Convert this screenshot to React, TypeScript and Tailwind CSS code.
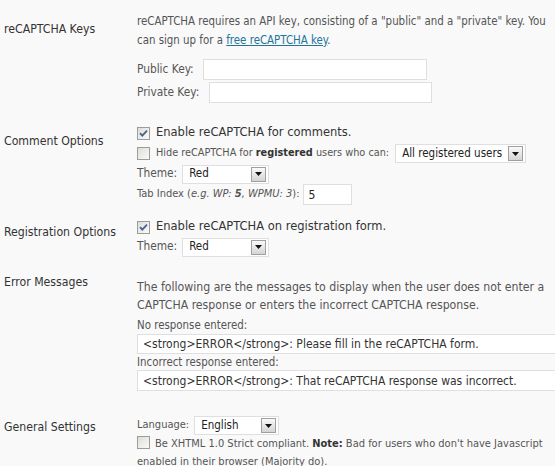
import React from 'react';

const cond = "font-['DejaVu_Sans_Condensed','DejaVu_Sans',sans-serif]";
const reg = "font-['DejaVu_Sans','Verdana',sans-serif]";

const Checkbox: React.FC<{ checked?: boolean }> = ({ checked = false }) => (
  <svg width="13" height="13" viewBox="0 0 13 13" className="shrink-0">
    <defs>
      <linearGradient id={checked ? 'cbOn' : 'cbOff'} x1="0" y1="0" x2="1" y2="1">
        <stop offset="0" stopColor="#dcdcd6" />
        <stop offset="1" stopColor="#fbfbfa" />
      </linearGradient>
    </defs>
    <rect x="0.5" y="0.5" width="12" height="12" fill={`url(#${checked ? 'cbOn' : 'cbOff'})`} stroke="#9c9c9c" />
    {checked && <path d="M3 6.2 L5.3 8.6 L10 3.6" fill="none" stroke="#4b5f94" strokeWidth="1.8" />}
  </svg>
);

const SelectBox: React.FC<{ value: string; width: string }> = ({ value, width }) => (
  <div
    className={`flex items-center justify-between h-[19px] border border-[#dfdfdf] bg-white pl-[6px] pr-[2px] shrink-0 ${width}`}
  >
    <span className={`${cond} text-[11.5px] text-[#222] whitespace-nowrap`}>{value}</span>
    <span className="flex items-center justify-center w-[15px] h-[15px] border border-[#a0a0a0] bg-gradient-to-b from-[#fafafa] to-[#d4d4d4]">
      <svg width="7" height="4" viewBox="0 0 7 4">
        <path d="M0 0 H7 L3.5 4 Z" fill="#111" />
      </svg>
    </span>
  </div>
);

const Label: React.FC<{ text: string; mt: string }> = ({ text, mt }) => (
  <div className={`w-[137px] shrink-0 pl-[4px] ${cond} text-[12.2px] leading-[18px] text-[#333] ${mt}`}>{text}</div>
);

export default function App() {
  return (
    <div className="w-[555px] h-[466px] overflow-hidden bg-[#f9f9f9] text-[#333]">
      {/* reCAPTCHA Keys */}
      <div className="flex pt-[12px]">
        <Label text="reCAPTCHA Keys" mt="mt-[8px]" />
        <div className="flex-1">
          <p className={`${cond} text-[11.4px] leading-[19px] text-[#555]`}>
            reCAPTCHA requires an API key, consisting of a "public" and a "private" key. You can sign up for a{' '}
            <a className="text-[#21759b] underline">free reCAPTCHA key</a>.
          </p>
          <div className="mt-[9px] flex items-center h-[21px] mb-[2px]">
            <span className={`${cond} text-[11.8px] text-[#555] w-[66px]`}>Public Key:</span>
            <div className="w-[224px] h-[21px] border border-[#dfdfdf] bg-white" />
          </div>
          <div className="flex items-center h-[21px]">
            <span className={`${cond} text-[11.8px] text-[#555] w-[72px]`}>Private Key:</span>
            <div className="w-[223px] h-[21px] border border-[#dfdfdf] bg-white" />
          </div>
        </div>
      </div>

      {/* Comment Options */}
      <div className="flex mt-[20px]">
        <Label text="Comment Options" mt="mt-[9px]" />
        <div className="flex-1">
          <div className="flex items-center h-[20px] gap-[6px]">
            <Checkbox checked />
            <span className={`${reg} text-[11.5px] text-[#333]`}>Enable reCAPTCHA for comments.</span>
          </div>
          <div className="flex items-center h-[21px] gap-[6px]">
            <Checkbox />
            <span className={`${cond} text-[10.8px] text-[#555] whitespace-nowrap`}>
              Hide reCAPTCHA for <strong className="text-[#333]">registered</strong> users who can:
            </span>
            <SelectBox value="All registered users" width="w-[131px]" />
          </div>
          <div className="flex items-center h-[20px] gap-[5px]">
            <span className={`${cond} text-[11.8px] text-[#555]`}>Theme:</span>
            <SelectBox value="Red" width="w-[87px]" />
          </div>
          <div className="flex items-center h-[21px] gap-[3px]">
            <span className={`${cond} text-[11px] text-[#555]`}>
              Tab Index (<em>e.g. WP: <strong>5</strong>, WPMU: 3</em>):
            </span>
            <div
              className={`w-[49px] h-[21px] border border-[#dfdfdf] bg-white pl-[5px] flex items-center ${cond} text-[12px] text-[#222]`}
            >
              5
            </div>
          </div>
        </div>
      </div>

      {/* Registration Options */}
      <div className="flex mt-[12px]">
        <Label text="Registration Options" mt="mt-[6px]" />
        <div className="flex-1">
          <div className="flex items-center h-[20px] gap-[6px]">
            <Checkbox checked />
            <span className={`${reg} text-[11.5px] text-[#333]`}>Enable reCAPTCHA on registration form.</span>
          </div>
          <div className="flex items-center h-[20px] gap-[5px]">
            <span className={`${cond} text-[11.8px] text-[#555]`}>Theme:</span>
            <SelectBox value="Red" width="w-[87px]" />
          </div>
        </div>
      </div>

      {/* Error Messages */}
      <div className="flex mt-[14px]">
        <Label text="Error Messages" mt="mt-[2px]" />
        <div className="flex-1 min-w-0">
          <p className={`${cond} text-[12.2px] leading-[18px] text-[#555] mt-[7px]`}>
            The following are the messages to display when the user does not enter a CAPTCHA response or enters the
            incorrect CAPTCHA response.
          </p>
          <div className={`${cond} text-[11.4px] leading-[18px] text-[#555] mt-[2px]`}>No response entered:</div>
          <div
            className={`w-[440px] h-[20px] border border-[#dfdfdf] bg-white pl-[5px] flex items-center ${cond} text-[12px] text-[#333] whitespace-nowrap`}
          >
            &lt;strong&gt;ERROR&lt;/strong&gt;: Please fill in the reCAPTCHA form.
          </div>
          <div className={`${cond} text-[11.4px] leading-[16px] text-[#555]`}>Incorrect response entered:</div>
          <div
            className={`w-[440px] h-[21px] border border-[#dfdfdf] bg-white pl-[5px] flex items-center ${cond} text-[12px] text-[#333] whitespace-nowrap`}
          >
            &lt;strong&gt;ERROR&lt;/strong&gt;: That reCAPTCHA response was incorrect.
          </div>
        </div>
      </div>

      {/* General Settings */}
      <div className="flex mt-[25px]">
        <Label text="General Settings" mt="mt-[2px]" />
        <div className="flex-1">
          <div className="flex items-center h-[19px] gap-[5px]">
            <span className={`${cond} text-[11px] text-[#555]`}>Language:</span>
            <SelectBox value="English" width="w-[85px]" />
          </div>
          <div className={`${cond} text-[11px] leading-[18px] text-[#555]`}>
            <span className="inline-flex align-[-2px] mr-[5px]">
              <Checkbox />
            </span>
            Be XHTML 1.0 Strict compliant. <strong className="text-[#333]">Note:</strong> Bad for users who don't have
            Javascript enabled in their browser (Majority do).
          </div>
        </div>
      </div>
    </div>
  );
}
